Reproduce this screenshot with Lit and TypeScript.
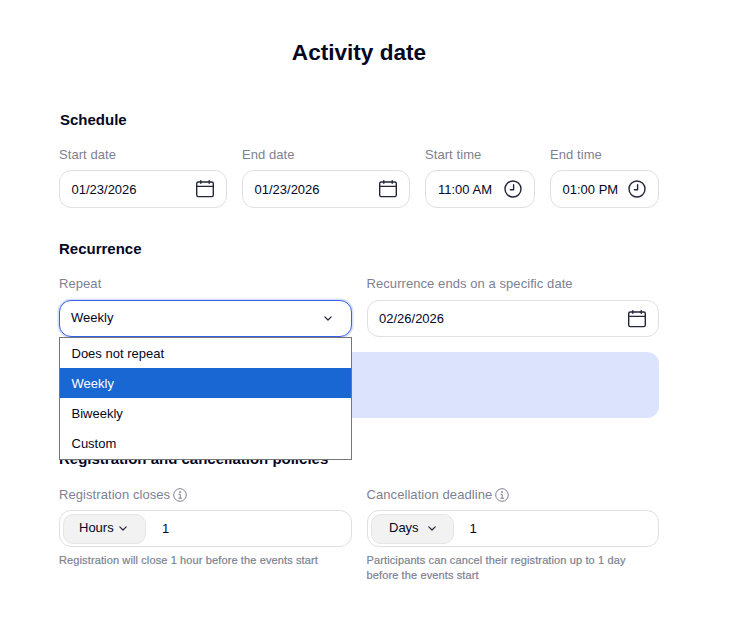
import { LitElement, html, css } from "lit";
import { customElement } from "lit/decorators.js";

const calendar = html`<svg class="ico" width="20" height="20" viewBox="0 0 20 20" fill="none" stroke="#23263b" stroke-width="1.4" stroke-linecap="round"><rect x="1.7" y="3" width="16.6" height="14.6" rx="1.6"/><path d="M1.7 7.4h16.6M5.8 1.6v2.6M14.2 1.6v2.6"/></svg>`;
const clock = html`<svg class="ico" width="18" height="18" viewBox="0 0 18 18" fill="none" stroke="#23263b" stroke-width="1.4" stroke-linecap="round" stroke-linejoin="round"><circle cx="9" cy="9" r="8"/><path d="M9.6 4.8v4.9H6.4"/></svg>`;
const chevron = html`<svg class="ico" width="8" height="5" viewBox="0 0 8 5" fill="none" stroke="#23263b" stroke-width="1.2" stroke-linecap="round" stroke-linejoin="round"><path d="M.8.8L4 4l3.2-3.2"/></svg>`;
const info = html`<svg class="ico" width="14" height="14" viewBox="0 0 14 14" fill="none" stroke="#7d7f92" stroke-width="1"><circle cx="7" cy="7" r="6.3"/><path d="M5.9 6.3H7.2V10.2M5.8 10.2h2.8" stroke-linecap="round"/><circle cx="7" cy="4" r=".5" fill="#7d7f92"/></svg>`;

@customElement("app-root")
export class AppRoot extends LitElement {
  static styles = css`
    :host { display: block; width: 733px; height: 626px; background: #fff; font-family: "Liberation Sans", Arial, sans-serif; color: #04071f; overflow: hidden; }
    .page { padding: 39px 74px 0 59px; box-sizing: border-box; }
    h1 { margin: 0 0 44px; font-size: 22.6px; line-height: 28px; font-weight: 700; text-align: center; }
    h2 { margin: 0; font-size: 15px; line-height: 18px; font-weight: 700; }
    .h-schedule { padding-left: 1px; margin-bottom: 18px; }
    .row { display: flex; gap: 15px; }
    .field { display: flex; flex-direction: column; min-width: 0; }
    .date { flex: 0 0 168px; }
    .st { flex: 0 0 110px; }
    .et { flex: 0 0 109px; }
    .half { flex: 1 1 0; }
    label { display: flex; align-items: center; gap: 3px; font-size: 13px; line-height: 16px; letter-spacing: 0.07px; color: #7d7f92; margin-bottom: 7px; }
    .rec-label { margin-bottom: 8px; }
    .box { box-sizing: border-box; height: 38px; border: 1px solid #dfdfe3; border-radius: 12px; display: flex; align-items: center; justify-content: space-between; padding: 0 11px 0 11.5px; font-size: 13px; color: #04071f; background: #fff; }
    .ico { flex-shrink: 0; }
    .box.short { height: 37px; }
    .time { padding: 0 12px 0 12px; }
    .et .time { padding-left: 11.5px; }
    .recurrence { margin-top: 32px; }
    .h-rec { margin-bottom: 18px; }
    .sel-wrap { position: relative; }
    .sel { border: 1px solid #3560e8; box-shadow: 0 0 0 1.5px #d9e0fc; padding: 0 19px 0 11px; }
    .sel span { margin-top: -2px; }
    .menu { position: absolute; z-index: 2; left: 0; right: 0; top: 37px; box-sizing: border-box; height: 123px; background: #fff; border: 1px solid #767676; font-size: 13px; }
    .opt { height: 30px; padding: 0 11.5px; display: flex; align-items: center; box-sizing: border-box; color: #04071f; }
    .opt.on { background: #1967d2; color: #fff; }
    .banner { height: 66px; margin-top: 15px; background: #dce3fd; border-radius: 12px; }
    .policies { margin-top: 32px; }
    .h-pol { margin-bottom: 19px; }
    .combo { padding: 0 0 0 3px; justify-content: flex-start; }
    .pill { box-sizing: border-box; width: 83px; height: 30px; border: 1px solid #e6e6e9; border-radius: 10px; background: #f2f2f3; display: flex; align-items: center; font-size: 13px; }
    .pill span { margin-top: -2px; }
    .hours { padding-left: 15px; gap: 5px; }
    .days { padding-left: 17.5px; gap: 9px; }
    .num { margin-left: 16px; }
    .help { margin: 6px 0 0; font-size: 11px; line-height: 15px; color: #7d7f92; letter-spacing: 0.12px; -webkit-text-stroke: 0.2px #7d7f92; }
  `;

  render() {
    return html`<div class="page">
      <h1>Activity date</h1>
      <h2 class="h-schedule">Schedule</h2>
      <div class="row">
        <div class="field date"><label>Start date</label><div class="box"><span>01/23/2026</span>${calendar}</div></div>
        <div class="field date"><label>End date</label><div class="box"><span>01/23/2026</span>${calendar}</div></div>
        <div class="field st"><label>Start time</label><div class="box time"><span>11:00 AM</span>${clock}</div></div>
        <div class="field et"><label>End time</label><div class="box time"><span>01:00 PM</span>${clock}</div></div>
      </div>
      <div class="recurrence">
        <h2 class="h-rec">Recurrence</h2>
        <div class="row">
          <div class="field half"><label class="rec-label">Repeat</label>
            <div class="sel-wrap">
              <div class="box short sel"><span>Weekly</span>${chevron}</div>
              <div class="menu">
                <div class="opt">Does not repeat</div>
                <div class="opt on">Weekly</div>
                <div class="opt">Biweekly</div>
                <div class="opt">Custom</div>
              </div>
            </div>
          </div>
          <div class="field half"><label class="rec-label">Recurrence ends on a specific date</label><div class="box short"><span>02/26/2026</span>${calendar}</div></div>
        </div>
        <div class="banner"></div>
      </div>
      <div class="policies">
        <h2 class="h-pol">Registration and cancellation policies</h2>
        <div class="row">
          <div class="field half"><label>Registration closes ${info}</label>
            <div class="box short combo"><div class="pill hours"><span>Hours</span>${chevron}</div><span class="num">1</span></div>
            <p class="help">Registration will close 1 hour before the events start</p>
          </div>
          <div class="field half"><label>Cancellation deadline ${info}</label>
            <div class="box short combo"><div class="pill days"><span>Days</span>${chevron}</div><span class="num">1</span></div>
            <p class="help">Participants can cancel their registration up to 1 day before the events start</p>
          </div>
        </div>
      </div>
    </div>`;
  }
}
